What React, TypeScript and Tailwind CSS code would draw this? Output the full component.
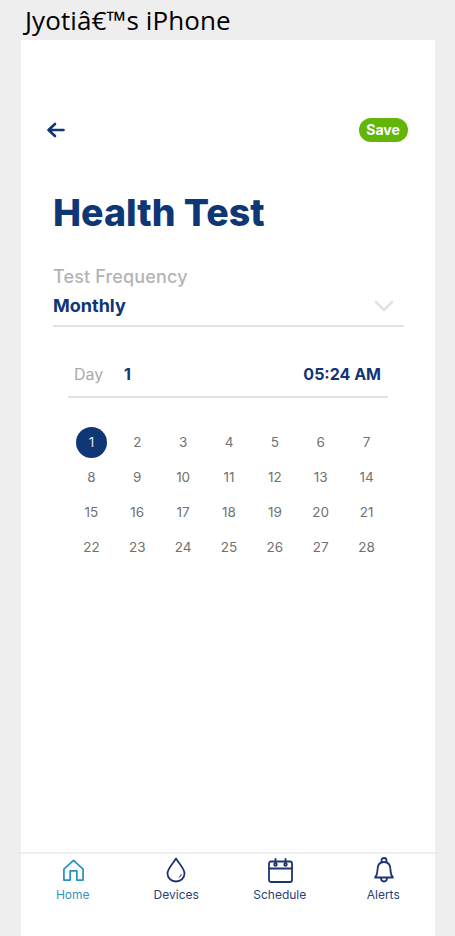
const navy = "#0f3675";

function Tab({ label, active, children }: { label: string; active?: boolean; children: React.ReactNode }) {
  return (
    <div className={`flex flex-col items-center w-[103.5px] ${active ? "text-[#2e95bd]" : "text-[#2a3f78]"}`}>
      <div className="h-[30px] flex items-center justify-center">{children}</div>
      <span className="text-[12px] leading-[15px] mt-[2px]">{label}</span>
    </div>
  );
}

export default function App() {
  const days = Array.from({ length: 28 }, (_, i) => i + 1);
  return (
    <div className="w-[455px] h-[936px] bg-[#eeeeee] flex flex-col overflow-hidden font-['Inter',sans-serif]">
      <div className="h-[40px] pl-[25px] text-[26px] leading-[40px] tracking-[0.1px] text-black font-['Open_Sans',sans-serif] whitespace-nowrap">
        Jyotiâ€™s iPhone
      </div>
      <main className="mx-[21px] w-[414px] h-[812px] bg-white flex flex-col">
        <div className="mt-[78px] h-[24px] pl-[25px] pr-[27px] flex items-center justify-between">
          <svg width="20" height="16" viewBox="0 0 20 16" fill="none" stroke={navy} strokeWidth="2.6" strokeLinecap="round" strokeLinejoin="round">
            <path d="M17.5 8H3M9 2L2.5 8L9 14" />
          </svg>
          <div className="h-[24px] w-[49px] pb-[1px] pr-[1px] rounded-full bg-[#64b50a] text-white text-[14px] font-bold flex items-center justify-center">Save</div>
        </div>
        <h1 className="mt-[48px] ml-[32px] text-[37.5px] leading-[45px] font-extrabold text-[#0f3675]">Health Test</h1>
        <div className="mt-[31px] mx-[32px] w-[351px] border-b-2 border-[#e3e3e3] h-[61px]">
          <div className="text-[18px] leading-[22px] font-medium tracking-[0.15px] text-[#b4b4b4]">Test Frequency</div>
          <div className="mt-[7px] flex items-center justify-between pr-[10px]">
            <span className="text-[18px] leading-[22px] font-bold text-[#0f3675]">Monthly</span>
            <svg width="20" height="12" viewBox="0 0 20 12" fill="none" stroke="#e3e3e3" strokeWidth="2.6" strokeLinecap="round" strokeLinejoin="round">
              <path d="M2 2L10 10L18 2" />
            </svg>
          </div>
        </div>
        <div className="mt-[24px] ml-[47px] w-[320px] h-[47px] border-b-2 border-[#e3e3e3] pl-[6px] pr-[6px] flex items-center justify-between">
          <div className="flex items-center text-[16px]">
            <span className="text-[#ababab] w-[50px]">Day</span>
            <span className="font-bold text-[#0f3675]">1</span>
          </div>
          <span className="text-[16px] font-bold text-[#0f3675] mr-[1px]">05:24 AM</span>
        </div>
        <div className="mt-[27px] ml-[47.5px] w-[321px] grid grid-cols-7">
          {days.map((d) => (
            <div key={d} className="h-[35px] flex items-center justify-center text-[13.5px] text-[#717171]">
              {d === 1 ? (
                <span className="w-[31px] h-[31px] rounded-full bg-[#0f3675] text-[#dfe5ef] flex items-center justify-center">1</span>
              ) : (
                d
              )}
            </div>
          ))}
        </div>
      </main>
      <nav className="mt-[2px] mx-[21px] w-[414px] h-[82px] bg-white flex items-start pt-[1px]">
        <Tab label="Home" active>
          <svg className="ml-[1px]" width="23" height="24" viewBox="0 0 24 24" fill="none" stroke="#2593bd" strokeWidth="1.8" strokeLinejoin="round" strokeLinecap="round">
            <path d="M2 11L12 2L22 11V22.5H15.5V13H8.5V22.5H2Z" />
          </svg>
        </Tab>
        <Tab label="Devices">
          <svg width="20" height="26" viewBox="0 0 20 26" fill="none" stroke="#1d3470" strokeWidth="1.8" strokeLinecap="round" strokeLinejoin="round">
            <path d="M10 1.5C7 6.5 1.5 11.5 1.5 16.5C1.5 21.2 5.3 24.5 10 24.5C14.7 24.5 18.5 21.2 18.5 16.5C18.5 11.5 13 6.5 10 1.5Z" />
            <path d="M13 20.5C14.2 19.7 15 18.6 15.2 17.4" strokeWidth="1" />
          </svg>
        </Tab>
        <Tab label="Schedule">
          <svg className="ml-[1px]" width="25" height="25" viewBox="0 0 25 25" fill="none" stroke="#1d3470" strokeWidth="1.8" strokeLinecap="round" strokeLinejoin="round">
            <rect x="1" y="3.5" width="23" height="20.5" rx="2" />
            <path d="M1 10.5H24" />
            <path d="M7.5 1V5M17.5 1V5" />
            <circle cx="7.5" cy="6.5" r="1.3" />
            <circle cx="17.5" cy="6.5" r="1.3" />
          </svg>
        </Tab>
        <Tab label="Alerts">
          <svg className="ml-[1px]" width="22" height="26" viewBox="0 0 22 26" fill="none" stroke="#1d3470" strokeWidth="1.8" strokeLinecap="round" strokeLinejoin="round">
            <path d="M2 20.5C3.8 18.5 4.5 16.5 4.5 13C4.5 8.5 6.5 5 11 5C15.5 5 17.5 8.5 17.5 13C17.5 16.5 18.2 18.5 20 20.5Z" />
            <path d="M8.5 5.2V3.5C8.5 2 9.5 1 11 1C12.5 1 13.5 2 13.5 3.5V5.2" />
            <path d="M8 21C8 23 9.3 24.5 11 24.5C12.7 24.5 14 23 14 21" />
          </svg>
        </Tab>
      </nav>
    </div>
  );
}
